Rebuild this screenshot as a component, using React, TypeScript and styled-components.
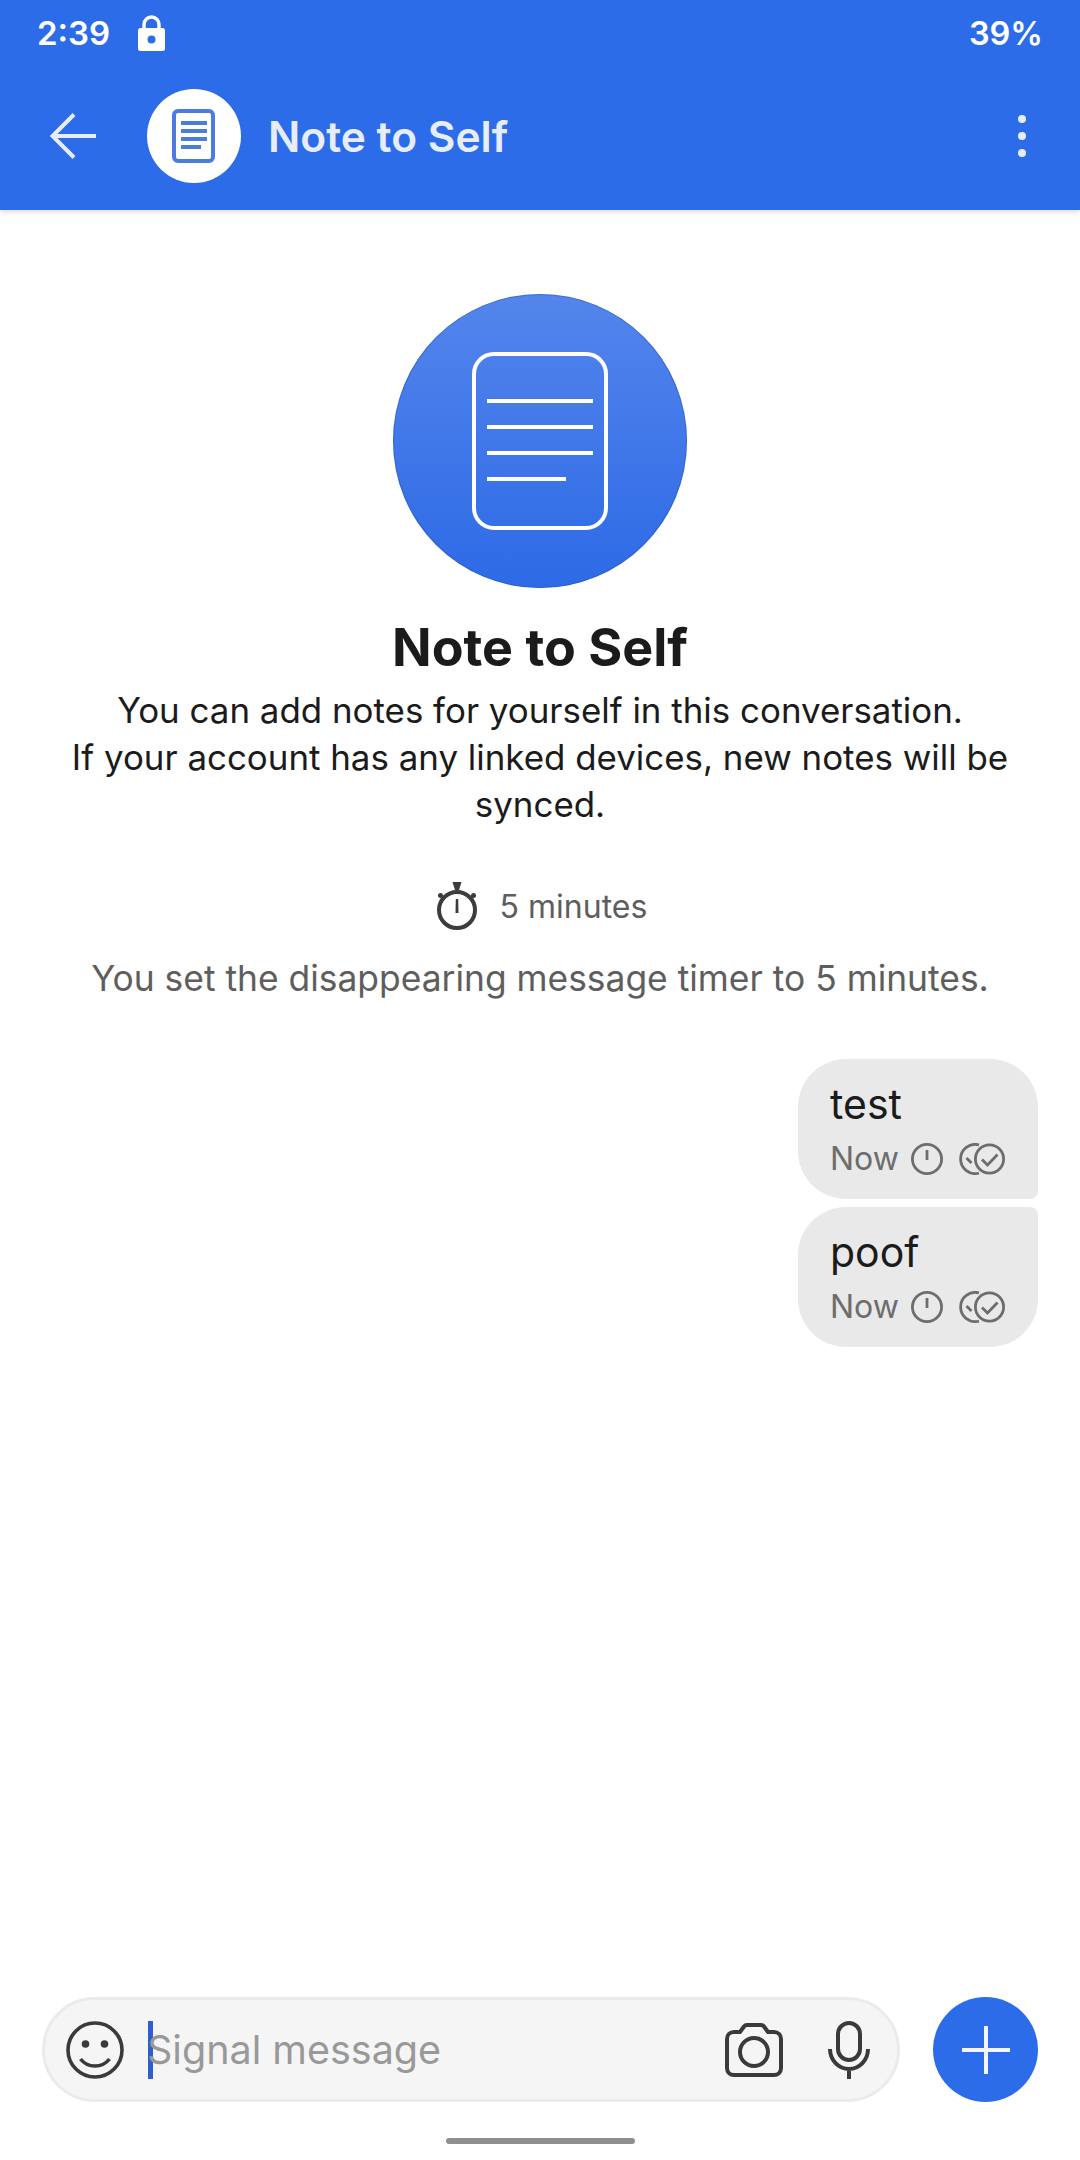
import React from "react";
import styled, { createGlobalStyle } from "styled-components";

const BLUE = "#2d6ce9";
const FONT = `Inter, Roboto, sans-serif`;

const Global = createGlobalStyle`
  html, body { margin: 0; padding: 0; background: #fff; }
  * { box-sizing: border-box; }
`;

const Page = styled.div`
  width: 1080px;
  height: 2160px;
  display: flex;
  flex-direction: column;
  background: #fff;
  font-family: ${FONT};
  overflow: hidden;
`;

const Header = styled.header`
  height: 210px;
  flex: none;
  background: ${BLUE};
  box-shadow: 0 2px 5px rgba(0, 0, 0, 0.14);
  display: flex;
  flex-direction: column;
  position: relative;
`;

const StatusBar = styled.div`
  height: 66px;
  padding: 0 37px 0 37px;
  display: flex;
  align-items: center;
  color: #fff;
  font-size: 33px;
  font-weight: 600;
`;

const StatusRight = styled.span`
  margin-left: auto;
  font-size: 32.500px;
`;

const LockWrap = styled.span`
  display: flex;
  margin-left: 28px;
`;

const Toolbar = styled.div`
  height: 94px;
  margin-top: 23px;
  padding: 0 48px 0 50px;
  display: flex;
  align-items: center;
  color: #e6edfc;
`;

const Avatar = styled.div`
  width: 94px;
  height: 94px;
  border-radius: 50%;
  background: #fff;
  margin-left: 51px;
  display: flex;
  align-items: center;
  justify-content: center;
`;

const Title = styled.div`
  margin-left: 27px;
  font-size: 42.500px;
  font-weight: 600;
`;

const Dots = styled.div`
  margin-left: auto;
  display: flex;
  flex-direction: column;
  gap: 9px;
  padding-right: 6px;
`;

const Dot = styled.span`
  width: 8px;
  height: 8px;
  border-radius: 50%;
  background: #e6edfc;
`;

const Conversation = styled.main`
  flex: 1;
  display: flex;
  flex-direction: column;
  align-items: center;
`;

const BigAvatar = styled.div`
  width: 294px;
  height: 294px;
  border-radius: 50%;
  margin-top: 84px;
  background: linear-gradient(180deg, #5485ec 0%, #2d6ae6 100%);
  box-shadow: inset 0 0 0 1px rgba(30, 70, 160, 0.35);
  display: flex;
  align-items: center;
  justify-content: center;
`;

const Heading = styled.h1`
  margin: 30px 0 0;
  font-size: 52px;
  line-height: 60px;
  font-weight: 700;
  color: #1b1b1b;
`;

const Intro = styled.p`
  margin: 9px 0 0;
  font-size: 34.900px;
  line-height: 47px;
  color: #1b1b1b;
  text-align: center;
`;

const TimerRow = styled.div`
  margin-top: 54px;
  padding-left: 3px;
  display: flex;
  align-items: center;
  gap: 22px;
  font-size: 32px;
  color: #5e5e5e;
`;

const TimerNote = styled.div`
  margin-top: 25px;
  font-size: 35.400px;
  line-height: 47px;
  color: #5e5e5e;
`;

const Messages = styled.div`
  align-self: stretch;
  margin-top: 57px;
  padding-right: 42px;
  display: flex;
  flex-direction: column;
  align-items: flex-end;
  gap: 8px;
`;

const Bubble = styled.div<{ $first?: boolean }>`
  width: 240px;
  height: 140px;
  padding: 21px 0 0 32px;
  background: #e9e9e9;
  border-radius: ${(p) => (p.$first ? "48px 48px 8px 48px" : "48px 8px 48px 48px")};
`;

const BubbleText = styled.div`
  font-size: 41px;
  line-height: 48px;
  color: #1b1b1b;
`;

const Meta = styled.div`
  margin-top: 13px;
  display: flex;
  align-items: center;
  font-size: 32px;
  line-height: 36px;
  color: #6d6d6d;
`;

const MetaClock = styled.span`
  display: flex;
  margin-left: 12px;
`;

const MetaCheck = styled.span`
  display: flex;
  margin-left: 16px;
`;

const ComposerRow = styled.div`
  flex: none;
  padding: 0 42px;
  display: flex;
  align-items: center;
  justify-content: space-between;
`;

const Composer = styled.div`
  width: 858px;
  height: 105px;
  border-radius: 53px;
  background: #f5f5f5;
  border: 3px solid #ebebeb;
  padding: 0 27px 0 21px;
  display: flex;
  align-items: center;
`;

const Caret = styled.span`
  width: 5px;
  height: 58px;
  margin-left: 24px;
  background: #2c5fd0;
  flex: none;
`;

const Placeholder = styled.span`
  font-size: 39.500px;
  color: #999;
  margin-left: -6px;
`;

const CameraWrap = styled.span`
  display: flex;
  margin-left: auto;
`;

const MicWrap = styled.span`
  display: flex;
  margin-left: 45px;
`;

const Send = styled.div`
  width: 105px;
  height: 105px;
  border-radius: 50%;
  background: ${BLUE};
  display: flex;
  align-items: center;
  justify-content: center;
`;

const HomeZone = styled.div`
  flex: none;
  height: 58px;
  padding-top: 36px;
  display: flex;
  justify-content: center;
`;

const HomeBar = styled.div`
  width: 189px;
  height: 6px;
  border-radius: 3px;
  background: #8f8f8f;
`;

const Lock = () => (
  <svg width="27" height="36" viewBox="0 0 27 36">
    <path d="M6 15V9.500a7.500 7.500 0 0 1 15 0V15" fill="none" stroke="#fff" strokeWidth="3.400" />
    <path fillRule="evenodd" fill="#fff" d="M2.500 13h22a2.500 2.500 0 0 1 2.500 2.500V33.500a2.500 2.500 0 0 1-2.500 2.500h-22A2.500 2.500 0 0 1 0 33.500V15.500A2.500 2.500 0 0 1 2.500 13zM13.500 20.500a4 4 0 1 0 0 8 4 4 0 0 0 0-8z" />
  </svg>
);

const Arrow = () => (
  <svg width="46" height="46" viewBox="0 0 46 46" fill="none" stroke="#e6edfc" strokeWidth="4">
    <path d="M46 23H3M24 1.500 2.500 23 24 44.500" />
  </svg>
);

const SmallDoc = () => (
  <svg width="44" height="54" viewBox="0 0 44 54" fill="none" stroke="#4a7ddc">
    <rect x="2" y="2" width="39" height="50" rx="4" strokeWidth="4" />
    <path d="M9 14h26M9 22h26M9 30h26M9 38h20" strokeWidth="4" />
  </svg>
);

const BigDoc = () => (
  <svg width="136" height="178" viewBox="0 0 136 178" fill="none" stroke="#fff" strokeWidth="4">
    <rect x="2" y="2" width="132" height="174" rx="20" />
    <path d="M15 49h106M15 75h106M15 101h106M15 127h79" />
  </svg>
);

const Stopwatch = () => (
  <svg width="42" height="48" viewBox="0 0 42 48" fill="none" stroke="#3c3c3c">
    <circle cx="21" cy="28" r="18" strokeWidth="4" />
    <path fill="#3c3c3c" stroke="none" d="M16.500 0h9L23 8h-4zM19.800 17h2.400L22.500 31h-3z" />
    <circle cx="4.500" cy="13.500" r="2.500" fill="#3c3c3c" stroke="none" />
    <circle cx="37.500" cy="13.500" r="2.500" fill="#3c3c3c" stroke="none" />
  </svg>
);

const MiniClock = () => (
  <svg width="32" height="32" viewBox="0 0 32 32" fill="none" stroke="#6d6d6d" strokeWidth="2.800">
    <circle cx="16" cy="16" r="14.600" />
    <path d="M16 7v10" />
  </svg>
);

const DoubleCheck = () => (
  <svg width="46" height="32" viewBox="0 0 46 32" fill="none" stroke="#6d6d6d" strokeWidth="2.800">
    <path d="M20 1.900A14.600 14.600 0 1 0 20 30.100" />
    <path d="M7.500 15l5 5" />
    <circle cx="30.500" cy="16" r="14.100" />
    <path d="M23 16.500l5.500 5.500L38.500 11.500" />
  </svg>
);

const Smiley = () => (
  <svg width="58" height="58" viewBox="0 0 58 58" fill="none" stroke="#3a3a3a" strokeWidth="3.600">
    <circle cx="29" cy="29" r="27" />
    <circle cx="19.500" cy="23" r="3.800" fill="#3a3a3a" stroke="none" />
    <circle cx="38.500" cy="23" r="3.800" fill="#3a3a3a" stroke="none" />
    <path d="M14.500 38c3.500 4.500 8.500 7 14.500 7s11-2.500 14.500-7" />
  </svg>
);

const Camera = () => (
  <svg width="58" height="54" viewBox="0 0 58 54" fill="none" stroke="#3a3a3a" strokeWidth="4">
    <path d="M9 9h6l4-5.500c.7-1 1.500-1.500 3-1.500h14c1.500 0 2.300.5 3 1.500L43 9h6c4 0 7 3 7 7v29c0 4-3 7-7 7H9c-4 0-7-3-7-7V16c0-4 3-7 7-7z" />
    <circle cx="29" cy="29" r="14" />
  </svg>
);

const Mic = () => (
  <svg width="42" height="58" viewBox="0 0 42 58" fill="none" stroke="#3a3a3a" strokeWidth="4">
    <rect x="10" y="2" width="22" height="37" rx="11" />
    <path d="M2 28c0 11 8.500 20 19 20s19-9 19-20M21 48v10" />
  </svg>
);

const Plus = () => (
  <svg width="48" height="48" viewBox="0 0 48 48" stroke="#f1f5fe" strokeWidth="4">
    <path d="M24 0v48M0 24h48" />
  </svg>
);

const Message = ({ text, first }: { text: string; first?: boolean }) => (
  <Bubble $first={first}>
    <BubbleText>{text}</BubbleText>
    <Meta>
      Now
      <MetaClock><MiniClock /></MetaClock>
      <MetaCheck><DoubleCheck /></MetaCheck>
    </Meta>
  </Bubble>
);

export default function App() {
  return (
    <Page>
      <Global />
      <Header>
        <StatusBar>
          2:39
          <LockWrap><Lock /></LockWrap>
          <StatusRight>39%</StatusRight>
        </StatusBar>
        <Toolbar>
          <Arrow />
          <Avatar><SmallDoc /></Avatar>
          <Title>Note to Self</Title>
          <Dots><Dot /><Dot /><Dot /></Dots>
        </Toolbar>
      </Header>
      <Conversation>
        <BigAvatar><BigDoc /></BigAvatar>
        <Heading>Note to Self</Heading>
        <Intro>
          You can add notes for yourself in this conversation.
          <br />
          If your account has any linked devices, new notes will be
          <br />
          synced.
        </Intro>
        <TimerRow>
          <Stopwatch />
          5 minutes
        </TimerRow>
        <TimerNote>You set the disappearing message timer to 5 minutes.</TimerNote>
        <Messages>
          <Message text="test" first />
          <Message text="poof" />
        </Messages>
      </Conversation>
      <ComposerRow>
        <Composer>
          <Smiley />
          <Caret />
          <Placeholder>Signal message</Placeholder>
          <CameraWrap><Camera /></CameraWrap>
          <MicWrap><Mic /></MicWrap>
        </Composer>
        <Send><Plus /></Send>
      </ComposerRow>
      <HomeZone><HomeBar /></HomeZone>
    </Page>
  );
}
